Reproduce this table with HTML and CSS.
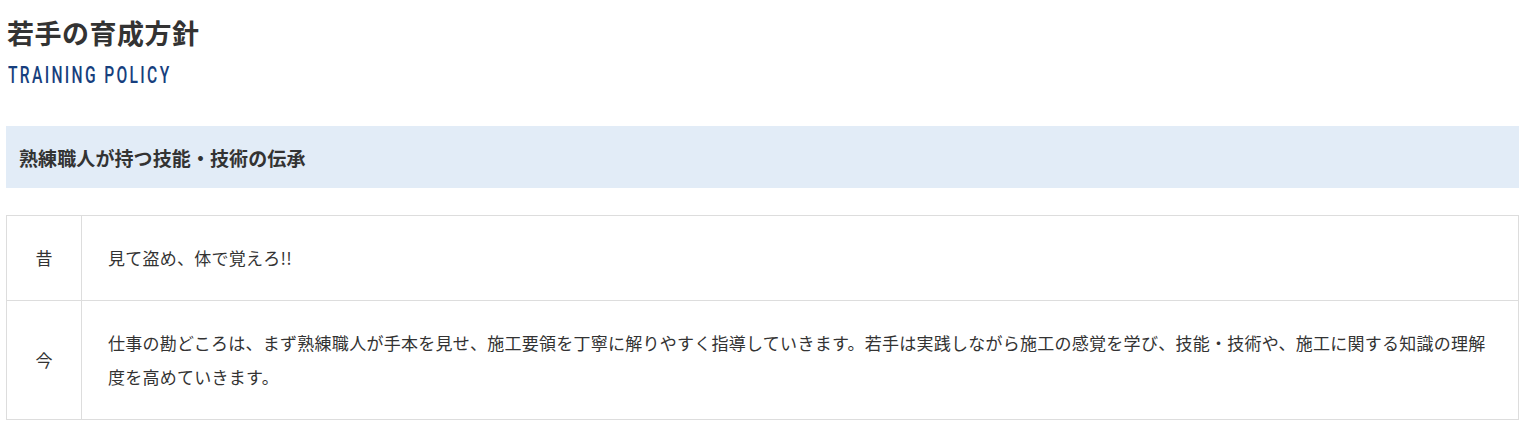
FILE: index.html
```html
<!DOCTYPE html>
<html lang="ja">
<head>
<meta charset="utf-8">
<title>若手の育成方針</title>
<link rel="stylesheet" href="styles.css">
</head>
<body>
<section class="policy">
  <header class="policy-head">
    <h2 class="policy-title">若手の育成方針</h2>
    <p class="policy-sub"><span class="policy-sub-text">TRAINING POLICY</span></p>
  </header>
  <h3 class="policy-banner">熟練職人が持つ技能・技術の伝承</h3>
  <table class="policy-table">
    <tr>
      <th class="policy-label">昔</th>
      <td class="policy-text">見て盗め、体で覚えろ!!</td>
    </tr>
    <tr>
      <th class="policy-label">今</th>
      <td class="policy-text">仕事の勘どころは、まず熟練職人が手本を見せ、施工要領を丁寧に解りやすく指導していきます。若手は実践しながら施工の感覚を学び、技能・技術や、施工に関する知識の理解度を高めていきます。</td>
    </tr>
  </table>
</section>
</body>
</html>
```

FILE: styles.css
```css
html, body {
  margin: 0;
  padding: 0;
  background: #ffffff;
}

body {
  font-family: "Noto Sans CJK JP", "Noto Sans", sans-serif;
  color: #333333;
}

.policy {
  width: 1513px;
  margin-left: 6px;
  padding-top: 13px;
}

.policy-head {
  display: flex;
  flex-direction: column;
  gap: 8px;
}

.policy-title {
  margin: 0;
  padding-left: 1px;
  font-size: 27px;
  line-height: 39px;
  font-weight: 700;
  letter-spacing: 0.5px;
  color: #333333;
}

.policy-sub {
  margin: 0;
  padding-left: 2px;
  height: 30px;
  line-height: 30px;
  white-space: nowrap;
}

.policy-sub-text {
  display: inline-block;
  font-family: Roboto, "Liberation Sans", sans-serif;
  font-size: 24px;
  font-weight: 500;
  letter-spacing: 3.6px;
  color: #173f7e;
  transform: scaleX(0.65);
  transform-origin: left center;
}

.policy-banner {
  margin: 36px 0 0;
  height: 62px;
  padding: 0 13px;
  display: flex;
  align-items: center;
  background: #e2ecf7;
  font-size: 19px;
  font-weight: 700;
  letter-spacing: 0.1px;
  color: #333333;
}

.policy-table {
  width: 100%;
  margin-top: 27px;
  border-collapse: collapse;
  border: 1px solid #dddddd;
}

.policy-label,
.policy-text {
  border: 1px solid #dddddd;
  font-size: 17px;
  line-height: 34px;
  font-weight: 400;
  letter-spacing: 0.26px;
  color: #333333;
  padding: 25px 26px;
  vertical-align: middle;
}

.policy-label {
  width: 75px;
  box-sizing: border-box;
  padding: 25px 0;
  text-align: center;
  letter-spacing: 0;
}

.policy-text {
  text-align: left;
}
```
